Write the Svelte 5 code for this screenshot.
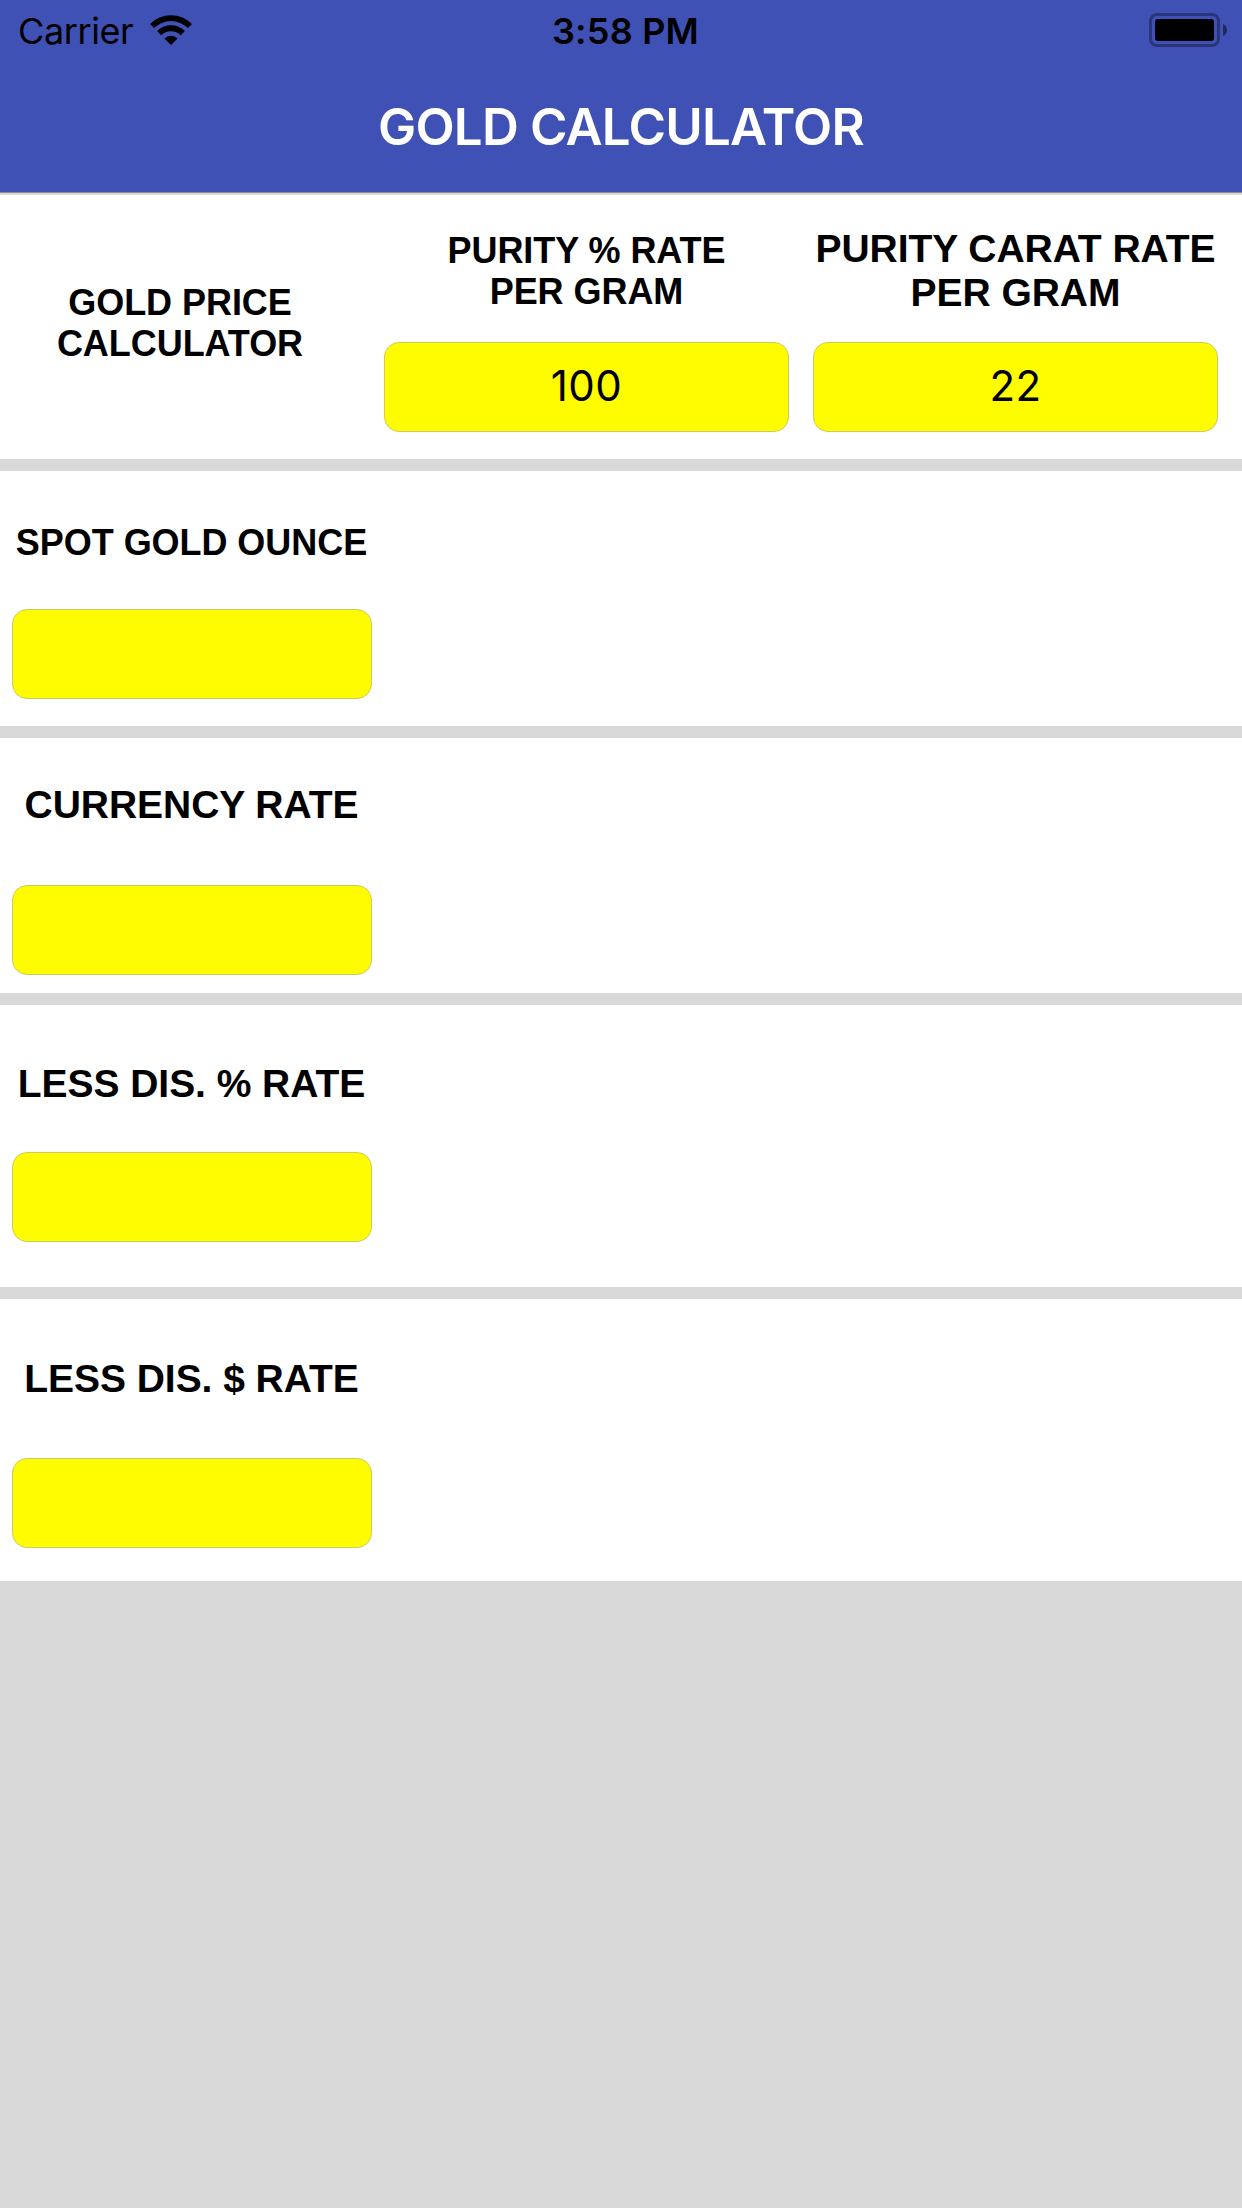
<script lang="ts">
    const rates = [
        { id: "percent", lines: ["PURITY % RATE", "PER GRAM"], value: "100" },
        { id: "carat", lines: ["PURITY CARAT RATE", "PER GRAM"], value: "22" },
    ];

    const fields = [
        { id: "spot", label: "SPOT GOLD OUNCE" },
        { id: "currency", label: "CURRENCY RATE" },
        { id: "less-percent", label: "LESS DIS. % RATE" },
        { id: "less-dollar", label: "LESS DIS. $ RATE" },
    ];
</script>

<div class="screen">
    <header>
        <div class="status">
            <div class="carrier">
                <span class="carrier-name">Carrier</span>
                <svg class="wifi" viewBox="0 0 42 30">
                    <path d="M0 9A29.7 29.7 0 0 1 42 9L37.9 13.1A23.9 23.9 0 0 0 4.1 13.1Z" />
                    <path d="M7.1 16.1A19.7 19.7 0 0 1 34.9 16.1L30.8 20.2A13.9 13.9 0 0 0 11.2 20.2Z" />
                    <path d="M14.4 23.4A9.3 9.3 0 0 1 27.6 23.4L21 30Z" />
                </svg>
            </div>
            <span class="time">3:58 PM</span>
            <svg class="battery" viewBox="0 0 78 34">
                <rect x="1.5" y="1.5" width="68" height="31" rx="6.5" />
                <rect class="level" x="6" y="6" width="59" height="22" rx="3" />
                <path class="cap" d="M74 11Q78 13 78 17T74 23Z" />
            </svg>
        </div>
        <h1>GOLD CALCULATOR</h1>
    </header>

    <section class="card rates">
        <h2>GOLD PRICE<br />CALCULATOR</h2>
        {#each rates as rate}
            <div class="rate {rate.id}">
                <label for={rate.id}>{rate.lines[0]}<br />{rate.lines[1]}</label>
                <input id={rate.id} value={rate.value} />
            </div>
        {/each}
    </section>

    {#each fields as field}
        <section class="card field {field.id}">
            <label for={field.id}>{field.label}</label>
            <input id={field.id} />
        </section>
    {/each}
</div>

<style>
    :global(body) {
        background: #d9d9d9;
    }
    .screen {
        width: 1242px;
        min-height: 2208px;
        display: flex;
        flex-direction: column;
        gap: 12px;
        background: #d9d9d9;
        color: #000;
        font-family: "Liberation Sans", Arial, sans-serif;
    }
    header {
        height: 192px;
        margin-bottom: -10px;
        border-bottom: 1px solid #8e8e8e;
        background: #3f51b5;
        font-family: Inter, sans-serif;
    }
    .status {
        height: 60px;
        padding: 2px 15px 0 18px;
        box-sizing: border-box;
        display: grid;
        grid-template-columns: 1fr auto 1fr;
        align-items: center;
        font-size: 36px;
        line-height: 44px;
    }
    .carrier {
        display: flex;
        align-items: center;
    }
    .carrier-name {
        width: 132px;
        letter-spacing: -0.4px;
        white-space: nowrap;
    }
    .wifi {
        width: 42px;
        height: 30px;
        margin-top: -2px;
    }
    .time {
        padding-left: 6px;
        font-weight: 600;
        letter-spacing: 0.2px;
    }
    .battery {
        width: 78px;
        height: 34px;
        margin-top: -2px;
        justify-self: end;
    }
    .battery rect {
        fill: none;
        stroke: #2a3679;
        stroke-width: 3;
    }
    .battery .level {
        fill: #000;
        stroke: none;
    }
    .battery .cap {
        fill: #1f295b;
    }
    h1 {
        margin: 0;
        color: #fff;
        font-size: 51px;
        font-weight: 600;
        letter-spacing: -0.8px;
        line-height: 134px;
        text-align: center;
    }
    .card {
        background: #fff;
        box-sizing: border-box;
    }
    .rates {
        height: 264px;
        padding: 0 24px 27px 0;
        display: grid;
        grid-template-columns: 360px 405px 405px;
        gap: 24px;
    }
    h2,
    label {
        margin: 0;
        font-size: 36px;
        font-weight: 700;
        line-height: 41px;
        letter-spacing: -0.05px;
        text-align: center;
        white-space: nowrap;
    }
    h2 {
        padding-top: 87px;
    }
    .rate,
    .field {
        display: flex;
        flex-direction: column;
        justify-content: space-between;
    }
    .rate {
        padding-top: 35px;
    }
    .carat {
        padding-top: 32px;
    }
    .carat label {
        font-size: 39px;
        line-height: 44px;
    }
    .field {
        height: 255px;
        padding: 51px 870px 27px 12px;
    }
    .field label {
        padding-right: 1px;
    }
    .currency {
        padding-top: 45px;
        padding-bottom: 18px;
    }
    .less-percent {
        height: 282px;
        padding-top: 57px;
        padding-bottom: 45px;
    }
    .less-dollar {
        height: 282px;
        padding-top: 58px;
        padding-bottom: 33px;
    }
    .currency label,
    .less-percent label,
    .less-dollar label {
        font-size: 39px;
        line-height: 44px;
    }
    input {
        width: 100%;
        height: 90px;
        padding: 0 0 3px;
        box-sizing: border-box;
        border: 1px solid #cbcb66;
        border-radius: 15px;
        background: #fffc00;
        color: #000;
        font: 42px Inter, sans-serif;
        letter-spacing: 0.5px;
        text-align: center;
        outline: none;
    }
</style>
